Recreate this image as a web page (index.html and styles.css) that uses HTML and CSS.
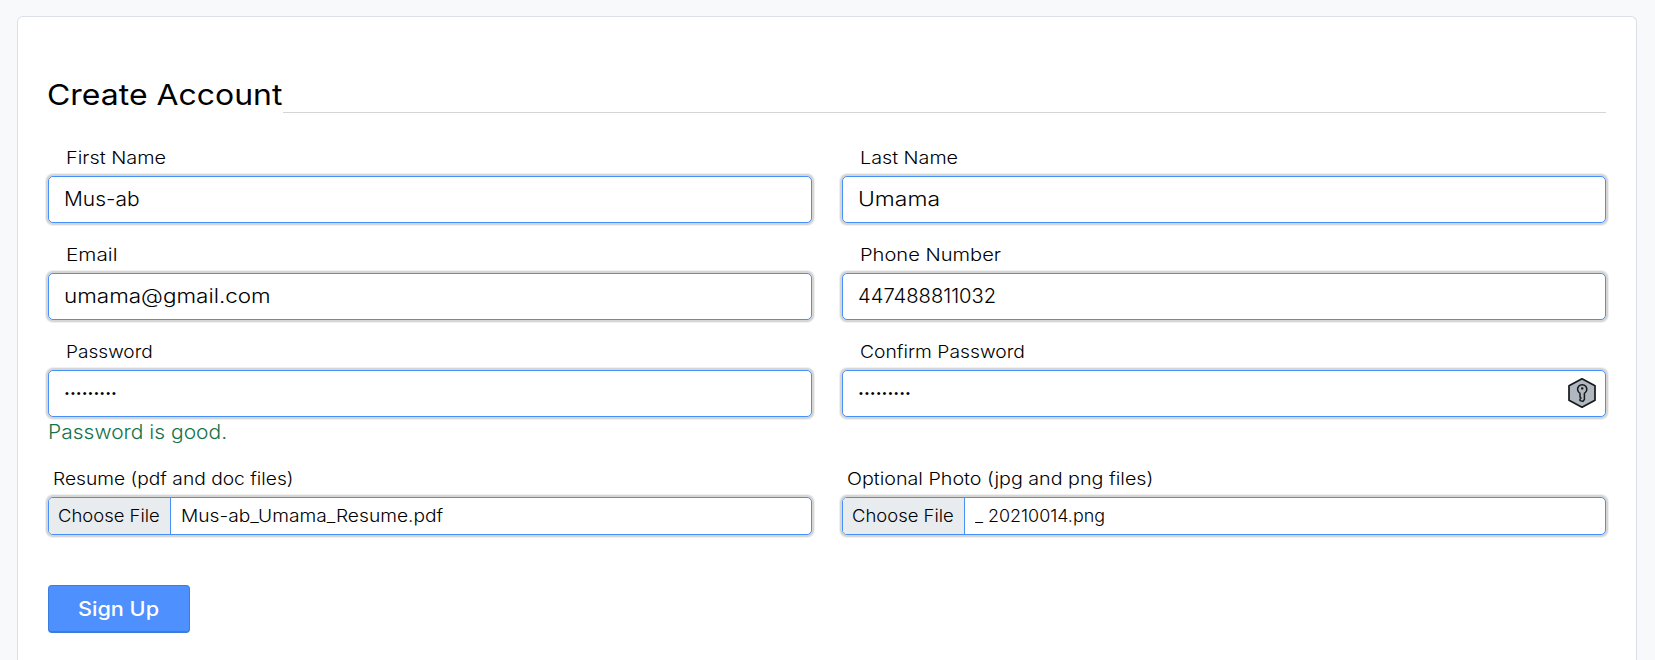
FILE: index.html
```
<!DOCTYPE html>
<html lang="en">
<head>
<meta charset="utf-8">
<title>Create Account</title>
<link rel="stylesheet" href="styles.css">
</head>
<body>
<main class="card">
  <header class="heading"><h1 class="title">Create Account</h1><span class="rule"></span></header>
  <form class="form">
    <div class="field">
      <label class="label"><span class="wide first-label">First Name</span></label>
      <div class="control"><span class="wide first-value">Mus-ab</span></div>
    </div>
    <div class="field">
      <label class="label"><span class="wide last-label">Last Name</span></label>
      <div class="control"><span class="wide last-value">Umama</span></div>
    </div>
    <div class="field">
      <label class="label"><span class="wide email-label">Email</span></label>
      <div class="control"><span class="wide email-value">umama@gmail.com</span></div>
    </div>
    <div class="field">
      <label class="label"><span class="wide phone-label">Phone Number</span></label>
      <div class="control"><span class="wide phone-value">447488811032</span></div>
    </div>
    <div class="field">
      <label class="label"><span class="wide password-label">Password</span></label>
      <div class="control"><span class="dots">•••••••••</span></div>
      <p class="message"><span class="wide message-text">Password is good.</span></p>
    </div>
    <div class="field">
      <label class="label"><span class="wide confirm-label">Confirm Password</span></label>
      <div class="control"><span class="dots">•••••••••</span>
        <svg class="key" width="30" height="32" viewBox="0 0 30 32" fill="none" stroke="#15181c" stroke-width="1.7" stroke-linejoin="round" stroke-linecap="round">
          <path d="M15 1.8 28 8.7V23.2L15 30.2 2 23.2V8.7Z" fill="#b0b7bf"/>
          <path d="M13 16.3A4.6 4.6 0 1 1 17.4 16.3V22.5L15.8 24.4 13 23.6V22L14 21 13 20Z" stroke-width="1.5"/>
          <circle cx="15.2" cy="11.4" r="1.2" fill="#15181c" stroke="none"/>
        </svg>
      </div>
    </div>
    <div class="field">
      <label class="label file-label"><span class="wide resume-label">Resume (pdf and doc files)</span></label>
      <div class="file"><span class="choose"><span class="wide choose-text">Choose File</span></span><span class="wide resume-value">Mus-ab_Umama_Resume.pdf</span></div>
    </div>
    <div class="field">
      <label class="label file-label"><span class="wide photo-label">Optional Photo (jpg and png files)</span></label>
      <div class="file"><span class="choose"><span class="wide choose-text">Choose File</span></span><span class="wide photo-value">_ 20210014.png</span></div>
    </div>
    <button class="submit" type="button"><span class="submit-text">Sign Up</span></button>
  </form>
</main>
</body>
</html>
```
FILE: styles.css
```
* { box-sizing: border-box; }
body {
  margin: 0;
  padding: 16px 18px 0 17px;
  background: #f8f9fb;
  color: #000;
  font-family: Inter, "Open Sans", sans-serif;
  font-weight: 300;
}
.card {
  height: 644px;
  padding: 60px 30px 0;
  background: #fff;
  border: 1px solid #dce0e6;
  border-bottom: 0;
  border-radius: 6px 6px 0 0;
}
.heading { display: flex; align-items: flex-end; height: 36px; }
.title {
  width: 235px;
  margin: 0;
  font-size: 29px;
  font-weight: 400;
  line-height: 36px;
  white-space: nowrap;
  transform: scaleX(1.102);
  transform-origin: 0 50%;
  margin-left: -1px;
  margin-right: 1px;
}
.rule { flex: 1; height: 1px; background: #d5d5d5; }
.form {
  display: grid;
  grid-template-columns: 1fr 1fr;
  gap: 20px 30px;
  margin-top: 33px;
}
.wide {
  display: inline-block;
  white-space: nowrap;
  transform-origin: 0 50%;
}
.label {
  display: block;
  height: 24px;
  margin: 0 0 6px;
  padding-left: 18px;
  font-size: 17.5px;
  line-height: 24px;
}
.control, .file {
  display: flex;
  align-items: center;
  border: 1px solid #4690fb;
  border-radius: 5px;
  background: #fff;
  box-shadow: 0 0 0 2px #d6d6d5, 0 0 0 3px #f0f0f0;
}
.control { height: 47px; padding: 0 8px 2px 15px; font-size: 19.5px; }
.dots {
  padding: 0 0 0 1px;
  font-family: "Liberation Sans", sans-serif;
  font-size: 11px;
  font-weight: 400;
  letter-spacing: 2.03px;
}
.key { margin-left: auto; }
.message {
  height: 24px;
  margin: 3px 0;
  color: #157347;
  font-size: 19.5px;
  line-height: 24px;
}
.file-label { padding-left: 5px; }
.file { height: 38px; overflow: hidden; font-size: 17.5px; line-height: 36px; }
.choose {
  width: 122px;
  height: 36px;
  margin-right: 10px;
  padding-left: 9px;
  border-right: 1px solid #4690fb;
  background: #e9ecef;
}
.submit {
  width: 142px;
  height: 48px;
  margin-top: 30px;
  padding: 0;
  border: 1px solid #3b7ddd;
  border-bottom-width: 2px;
  border-radius: 4px;
  background: #4d90fe;
  color: #fff;
  font: 500 19.5px Inter, sans-serif;
}
.submit-text { display: inline-block; transform: scaleX(1.11); }
.first-label { transform: scaleX(1.135); }
.last-label { transform: scaleX(1.127); }
.email-label { transform: scaleX(1.185); }
.phone-label { transform: scaleX(1.148); }
.password-label { transform: scaleX(1.09); }
.confirm-label { transform: scaleX(1.102); }
.resume-label { transform: scaleX(1.097); }
.photo-label { transform: scaleX(1.125); }
.choose-text { transform: scaleX(1.055); }
.first-value { transform: scaleX(1.075); }
.last-value { transform: scaleX(1.175); }
.email-value { transform: scaleX(1.152); }
.phone-value { transform: scaleX(1.035); }
.message-text { transform: scaleX(1.077); }
.resume-value { transform: scaleX(1.096); }
.photo-value { transform: scaleX(1.022); }
```
